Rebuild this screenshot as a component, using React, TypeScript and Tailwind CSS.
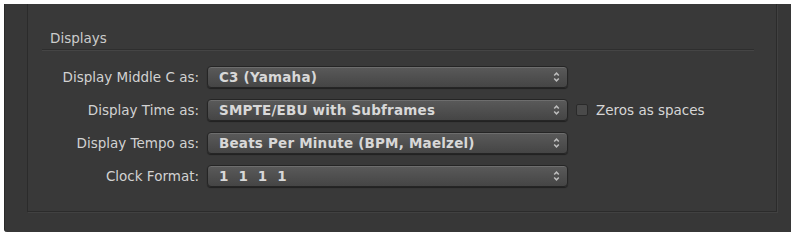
import React from "react";

const rows = [
  { label: "Display Middle C as:", value: "C3 (Yamaha)" },
  { label: "Display Time as:", value: "SMPTE/EBU with Subframes", extra: true },
  { label: "Display Tempo as:", value: "Beats Per Minute (BPM, Maelzel)" },
  { label: "Clock Format:", value: "1  1  1  1" },
];

function Arrows() {
  return (
    <svg width="7" height="12" viewBox="0 0 7 12" className="shrink-0">
      <path d="M1.2 4.6 L3.5 2.2 L5.8 4.6" fill="none" stroke="#bdbdbd" strokeWidth="1.5" />
      <path d="M1.2 7.4 L3.5 9.8 L5.8 7.4" fill="none" stroke="#bdbdbd" strokeWidth="1.5" />
    </svg>
  );
}

function Popup({ value }: { value: string }) {
  return (
    <div className="flex h-[22px] w-[361px] items-center justify-between rounded-[4px] border border-[#252525] bg-gradient-to-b from-[#5a5a5a] to-[#454545] pl-[11px] pr-[7px] shadow-[inset_0_1px_0_rgba(255,255,255,0.12),0_1px_1px_rgba(0,0,0,0.45)]">
      <span
        className="whitespace-pre text-[13.5px] font-bold tracking-[0.2px] text-[#d8d8d8]"
        style={{ fontFamily: '"DejaVu Sans", sans-serif' }}
      >
        {value}
      </span>
      <Arrows />
    </div>
  );
}

export default function App() {
  return (
    <div
      className="h-[235px] w-[795px] overflow-hidden bg-white pl-[4px] pt-[4px]"
      style={{ fontFamily: '"DejaVu Sans", sans-serif' }}
    >
      <div className="h-[228px] w-[787px] rounded-bl-[3px] border-l border-[#2a2a2a] bg-[#373737]">
        <div className="ml-[22px] h-[208px] w-[750px] border-x border-b border-[#2b2b2b] bg-[#393939] shadow-[1px_1px_0_rgba(255,255,255,0.05)]">
          <div className="pl-[22px] pt-[26px] text-[13.5px] leading-[16px] text-[#cccccc]">Displays</div>
          <div className="ml-[14px] mt-[3px] h-[2px] w-[712px] border-b border-t border-[#2e2e2e] border-b-[#454545]" />
          <div className="mt-[15px] grid grid-cols-[171px_361px_auto] items-center gap-x-[8px] gap-y-[11px]">
            {rows.map((r) => (
              <React.Fragment key={r.label}>
                <div className="text-right text-[13.5px] text-[#d2d2d2]">{r.label}</div>
                <Popup value={r.value} />
                <div className="flex items-center gap-[8px]">
                  {r.extra && (
                    <>
                      <div className="h-[12px] w-[12px] rounded-[2px] border border-[#2a2a2a] bg-[#4a4a4a]" />
                      <span className="text-[13.5px] text-[#d6d6d6]">Zeros as spaces</span>
                    </>
                  )}
                </div>
              </React.Fragment>
            ))}
          </div>
        </div>
      </div>
    </div>
  );
}
